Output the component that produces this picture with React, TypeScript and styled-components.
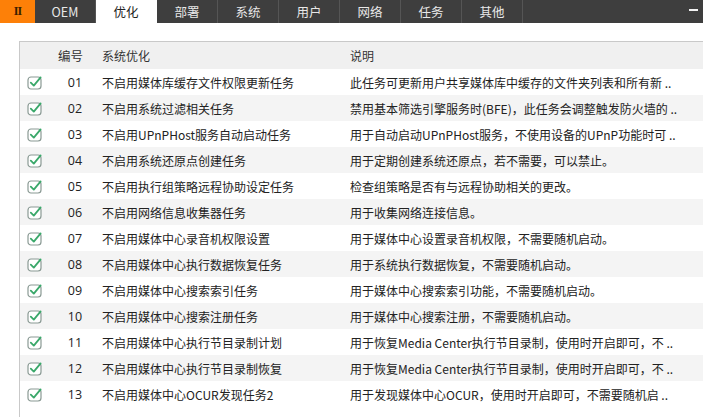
import React from 'react'
import styled, { createGlobalStyle } from 'styled-components'

const GlobalStyle = createGlobalStyle`
    html, body {
        margin: 0;
        padding: 0;
        background: #ffffff;
        overflow: hidden;
    }
    body {
        font-family: "Segoe UI", "Noto Sans", "Noto Sans CJK SC", sans-serif;
        font-size: 12px;
        color: #222;
    }
`

const Page = styled.div`
    width: 703px;
    height: 417px;
    display: flex;
    flex-direction: column;
    overflow: hidden;
`

const TabBar = styled.div`
    height: 23px;
    background: #3e3e3e;
    display: flex;
    align-items: stretch;
    flex-shrink: 0;
`

const MenuTab = styled.div`
    width: 35px;
    background: #fd8008;
    color: #3a2000;
    font-family: "Liberation Serif", serif;
    font-weight: bold;
    font-size: 12px;
    display: flex;
    align-items: center;
    justify-content: center;
    letter-spacing: -1px;
`

const Tab = styled.div<{ $active?: boolean }>`
    width: 61px;
    display: flex;
    align-items: center;
    justify-content: center;
    font-family: "Noto Sans CJK SC", sans-serif;
    font-size: 12.5px;
    color: ${(p) => (p.$active ? '#222' : '#e8e8e8')};
    background: ${(p) => (p.$active ? '#ffffff' : 'transparent')};
    border-right: 1px solid ${(p) => (p.$active ? '#ffffff' : '#555555')};
    box-sizing: border-box;
`

const Spacer = styled.div`
    flex: 1;
`

const Minimize = styled.div`
    width: 26px;
    display: flex;
    align-items: center;
    justify-content: center;
    &::before {
        content: '';
        width: 9px;
        height: 2px;
        margin-top: -4px;
        margin-left: 6px;
        background: #f2f2f2;
    }
`

const Body = styled.div`
    flex: 1;
    padding: 18px 0 0 19px;
    position: relative;
`

const Table = styled.div`
    border-top: 1px solid #c9c9c9;
    border-left: 1px solid #c9c9c9;
    height: 400px;
`

const Row = styled.div<{ $head?: boolean; $alt?: boolean }>`
    display: grid;
    grid-template-columns: 30px 52px 248px 1fr;
    align-items: center;
    height: ${(p) => (p.$head ? '27px' : '26px')};
    background: ${(p) => (p.$head ? '#f0f0f0' : p.$alt ? '#f4f4f4' : '#ffffff')};
    font-family: "Noto Sans CJK SC", sans-serif;
    font-size: 12px;
    color: ${(p) => (p.$head ? '#333' : '#222')};
    white-space: nowrap;
`

const CheckCell = styled.div`
    display: flex;
    align-items: center;
    padding-left: 7px;
`

const NumCell = styled.div<{ $head?: boolean }>`
    text-align: ${(p) => (p.$head ? 'left' : 'center')};
    padding-left: ${(p) => (p.$head ? '8px' : '0')};
    padding-right: ${(p) => (p.$head ? '0' : '2px')};
    font-family: ${(p) => (p.$head ? '"Noto Sans CJK SC"' : '"Open Sans"')}, sans-serif;
    font-size: 12.5px;
`

const TextCell = styled.div`
    overflow: hidden;
`

const PeekButton = styled.div`
    position: absolute;
    left: 598px;
    bottom: -8px;
    width: 42px;
    height: 12px;
    border: 1px solid #cfcfcf;
    border-radius: 2px;
    background: #f6f6f6;
`

function CheckIcon() {
    return (
        <svg width="16" height="15" viewBox="0 0 16 15">
            <rect x="1" y="2" width="13" height="12" rx="3" fill="#fff" stroke="#8a9a94" strokeWidth="1.2" />
            <path d="M3.8 7.6 L6.8 10.6 L13.6 2.4" fill="none" stroke="#3aa86a" strokeWidth="1.8" strokeLinecap="round" strokeLinejoin="round" />
        </svg>
    )
}

const tabs = ['OEM', '优化', '部署', '系统', '用户', '网络', '任务', '其他']

const items = [
    ['01', '不启用媒体库缓存文件权限更新任务', '此任务可更新用户共享媒体库中缓存的文件夹列表和所有新 ..'],
    ['02', '不启用系统过滤相关任务', '禁用基本筛选引擎服务时(BFE)，此任务会调整触发防火墙的 ..'],
    ['03', '不启用UPnPHost服务自动启动任务', '用于自动启动UPnPHost服务，不使用设备的UPnP功能时可 ..'],
    ['04', '不启用系统还原点创建任务', '用于定期创建系统还原点，若不需要，可以禁止。'],
    ['05', '不启用执行组策略远程协助设定任务', '检查组策略是否有与远程协助相关的更改。'],
    ['06', '不启用网络信息收集器任务', '用于收集网络连接信息。'],
    ['07', '不启用媒体中心录音机权限设置', '用于媒体中心设置录音机权限，不需要随机启动。'],
    ['08', '不启用媒体中心执行数据恢复任务', '用于系统执行数据恢复，不需要随机启动。'],
    ['09', '不启用媒体中心搜索索引任务', '用于媒体中心搜索索引功能，不需要随机启动。'],
    ['10', '不启用媒体中心搜索注册任务', '用于媒体中心搜索注册，不需要随机启动。'],
    ['11', '不启用媒体中心执行节目录制计划', '用于恢复Media Center执行节目录制，使用时开启即可，不 ..'],
    ['12', '不启用媒体中心执行节目录制恢复', '用于恢复Media Center执行节目录制，使用时开启即可，不 ..'],
    ['13', '不启用媒体中心OCUR发现任务2', '用于发现媒体中心OCUR，使用时开启即可，不需要随机启 ..'],
]

function App() {
    return (
        <Page>
            <GlobalStyle />
            <TabBar>
                <MenuTab>II</MenuTab>
                {tabs.map((t) => (
                    <Tab key={t} $active={t === '优化'}>{t}</Tab>
                ))}
                <Spacer />
                <Minimize />
            </TabBar>
            <Body>
                <Table>
                    <Row $head>
                        <div />
                        <NumCell $head>编号</NumCell>
                        <TextCell>系统优化</TextCell>
                        <TextCell>说明</TextCell>
                    </Row>
                    {items.map(([num, name, desc], i) => (
                        <Row key={num} $alt={i % 2 === 1}>
                            <CheckCell><CheckIcon /></CheckCell>
                            <NumCell>{num}</NumCell>
                            <TextCell>{name}</TextCell>
                            <TextCell>{desc}</TextCell>
                        </Row>
                    ))}
                </Table>
                <PeekButton />
            </Body>
        </Page>
    )
}

export default App
